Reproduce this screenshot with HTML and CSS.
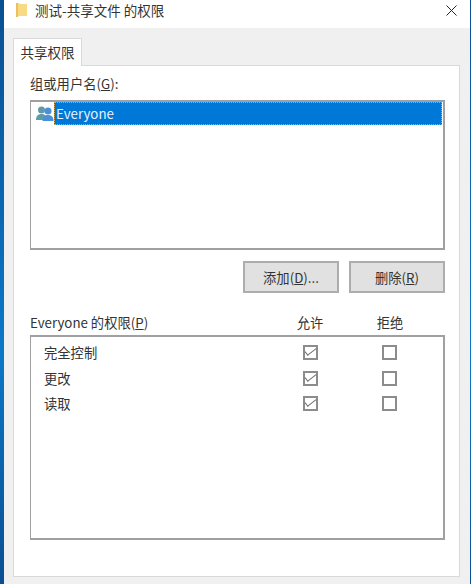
FILE: index.html
```html
<!DOCTYPE html>
<html lang="zh-CN">
<head>
  <meta charset="UTF-8">
  <title>测试-共享文件 的权限</title>
  <link rel="stylesheet" href="styles.css">
</head>
<body>
  <div class="window">
    <div class="titlebar">
      <svg class="folder" width="11" height="15" viewBox="0 0 11 15">
        <path d="M0 0h3l1 1h7v12H3l-3 1z" fill="#f8da85"/>
        <path d="M0 0h2v14H0z" fill="#ecc05c"/>
      </svg>
      <span class="title">测试-共享文件 的权限</span>
      <svg class="close" width="11" height="11" viewBox="0 0 11 11">
        <path d="M0.5 0.5l10 10M10.5 0.5l-10 10" stroke="#222" stroke-width="1" fill="none"/>
      </svg>
    </div>

    <div class="body">
      <div class="tab">共享权限</div>
      <div class="page">
        <div class="label">组或用户名(<u>G</u>):</div>
        <div class="listbox users">
          <div class="user-row">
            <svg class="users-icon" width="18" height="17" viewBox="0 0 18 17">
              <circle cx="5.5" cy="5" r="3.5" fill="#5f9aa8"/>
              <path d="M0 15c0-4 2-6 5.5-6S11 11 11 15z" fill="#5f9aa8"/>
              <circle cx="12" cy="6" r="3.5" fill="#4a90d9"/>
              <path d="M6.5 16c0-4 2-6 5.5-6s5.5 2 5.5 6z" fill="#4a90d9"/>
            </svg>
            <span class="user-name">Everyone</span>
          </div>
        </div>

        <div class="buttons">
          <button class="btn">添加(<u>D</u>)...</button>
          <button class="btn">删除(<u>R</u>)</button>
        </div>

        <div class="perm-head">
          <span class="perm-name">Everyone 的权限(<u>P</u>)</span>
          <span class="perm-col">允许</span>
          <span class="perm-col">拒绝</span>
        </div>
        <div class="listbox perms">
          <div class="perm-row">
            <span class="perm-name">完全控制</span>
            <span class="perm-col"><span class="check on"></span></span>
            <span class="perm-col"><span class="check"></span></span>
          </div>
          <div class="perm-row">
            <span class="perm-name">更改</span>
            <span class="perm-col"><span class="check on"></span></span>
            <span class="perm-col"><span class="check"></span></span>
          </div>
          <div class="perm-row">
            <span class="perm-name">读取</span>
            <span class="perm-col"><span class="check on"></span></span>
            <span class="perm-col"><span class="check"></span></span>
          </div>
        </div>
      </div>
    </div>
  </div>
</body>
</html>
```

FILE: styles.css
```css
html, body {
  margin: 0;
  padding: 0;
  height: 100%;
}

body {
  background: linear-gradient(#0a4f92, #0a78c8 60%, #0a4f92);
  color: #333;
  font-family: "Noto Sans CJK SC", "Liberation Sans", sans-serif;
  font-size: 13.3px;
  overflow: hidden;
}

.window {
  margin-left: 4px;
  margin-right: 1px;
  height: 584px;
  background: #f0f0f0;
  display: flex;
  flex-direction: column;
}

.titlebar {
  box-sizing: border-box;
  height: 28px;
  background: #fff;
  display: flex;
  align-items: center;
  padding: 0 13px 8px 12px;
}

.folder {
  margin-right: 8px;
}

.title {
  flex: 1;
  font-size: 13.5px;
}

.body {
  padding: 10px 10px 7px 9px;
  flex: 1;
  display: flex;
  flex-direction: column;
  align-items: flex-start;
}

.tab {
  background: #fff;
  border: 1px solid #d9d9d9;
  border-bottom: none;
  height: 27px;
  width: 67px;
  line-height: 26px;
  text-align: center;
  font-size: 13.5px;
  margin-bottom: -1px;
  position: relative;
}

.page {
  align-self: stretch;
  flex: 1;
  background: #fff;
  border: 1px solid #d9d9d9;
  padding: 10px 14px 0 16px;
}

.label {
  height: 24px;
  line-height: 16px;
}

.listbox {
  border: 1px solid #a0a0a0;
  border-width: 2px 2px 2px 1px;
  background: #fff;
}

.users {
  height: 146px;
  padding: 0 1px 0 0;
}

.user-row {
  display: flex;
  align-items: center;
  height: 23px;
  padding-left: 5px;
}

.users-icon {
  flex: none;
}

.user-name {
  flex: 1;
  background: #0078d7;
  color: #e8f2fb;
  height: 23px;
  line-height: 24px;
  padding-left: 2px;
  outline: 1px dotted #c9a860;
  outline-offset: -1px;
}

.buttons {
  display: flex;
  justify-content: flex-end;
  gap: 10px;
  margin-top: 11px;
}

.btn {
  width: 96px;
  height: 32px;
  background: #e1e1e1;
  border: 2px solid #adadad;
  color: #333;
  font-family: inherit;
  font-size: 13.3px;
  padding: 0;
}

.perm-head {
  display: flex;
  align-items: center;
  height: 20px;
  margin-top: 19px;
  margin-bottom: 3px;
}

.perm-name {
  flex: 1;
}

.perm-col {
  width: 78px;
  text-align: center;
  display: flex;
  justify-content: center;
}

.perm-head .perm-col:nth-child(2) {
  margin-right: 2px;
}

.perm-row .perm-col:nth-child(2) {
  margin-right: 1px;
}

.perm-head .perm-col:last-child {
  margin-right: 16px;
}

.perm-row .perm-col:last-child {
  margin-right: 15px;
}

.perms {
  height: 198px;
  padding-top: 3px;
}

.perm-row {
  display: flex;
  align-items: center;
  height: 25.5px;
  padding-left: 13px;
}

.check {
  width: 11px;
  height: 11px;
  border: 2px solid #8c8c8c;
  display: block;
  position: relative;
}

.check.on::after {
  content: "";
  position: absolute;
  left: 3px;
  top: -2px;
  width: 4px;
  height: 10px;
  border: solid #6e6e6e;
  border-width: 0 1px 1px 0;
  transform: rotate(52deg);
}
```
